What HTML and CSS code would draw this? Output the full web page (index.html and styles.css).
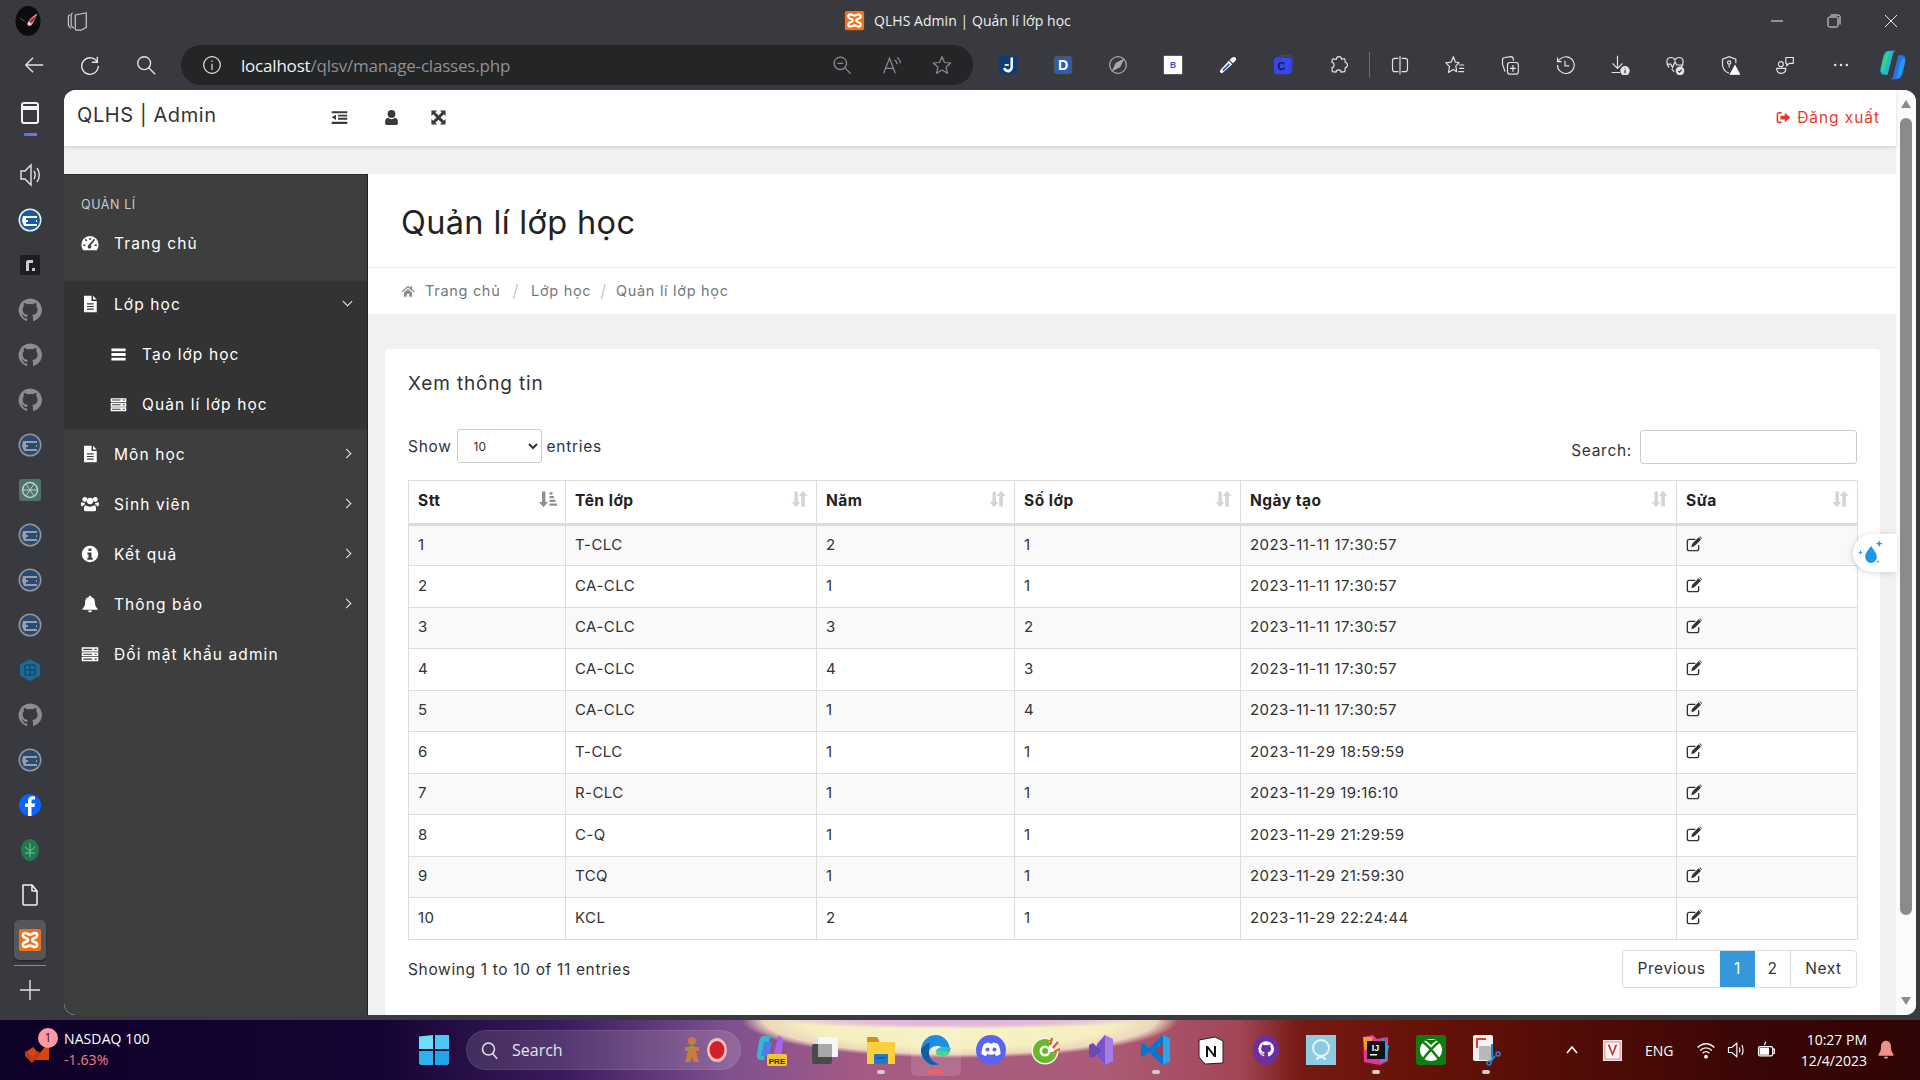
FILE: index.html
```html
<!DOCTYPE html>
<html lang="vi">
<head>
<meta charset="utf-8">
<title>QLHS Admin | Quản lí lớp học</title>
<link rel="stylesheet" href="styles.css">
</head>
<body>
<svg class="defs" aria-hidden="true">
  <symbol id="i-xampp" viewBox="0 0 24 24"><rect x="1" y="1" width="22" height="22" rx="2" fill="#f0701c"/><path d="M7 5c2 0 3 1.500 5 1.500S15 5 17 5c2.800 0 3 4-.5 5-1.500.4-2.500 1-2.500 2s1 1.600 2.500 2c3.500 1 3.300 5 .5 5-2 0-3-1.500-5-1.500S9 19 7 19c-2.800 0-3-4 .5-5 1.500-.4 2.500-1 2.500-2s-1-1.600-2.500-2C4 9 4.200 5 7 5z" fill="none" stroke="#fff" stroke-width="2.600"/></symbol>
  <symbol id="i-site" viewBox="0 0 24 24"><circle cx="12" cy="12" r="11.500" fill="#e8eef6"/><circle cx="12" cy="12" r="10" fill="#1b5ba6"/><path d="M5 8h14v2H8v2h11v2H8v2h11v2H6l-2-5z" fill="#fff"/><path d="M10 12h8v2h-8z" fill="#1b5ba6"/></symbol>
  <symbol id="i-github" viewBox="0 0 24 24"><path fill="#8b8c90" fill-rule="evenodd" d="M12 .5a11.500 11.500 0 0 0-3.600 22.400c.6.100.8-.2.800-.6v-2c-3.200.7-3.900-1.500-3.900-1.500-.5-1.300-1.300-1.700-1.300-1.700-1-.7.100-.7.100-.7 1.200.1 1.800 1.200 1.800 1.200 1 1.800 2.700 1.300 3.400 1 .1-.8.400-1.300.7-1.600-2.600-.3-5.300-1.300-5.300-5.700 0-1.300.4-2.300 1.200-3.100-.1-.3-.5-1.500.1-3.100 0 0 1-.3 3.200 1.200a11 11 0 0 1 5.800 0c2.200-1.500 3.200-1.200 3.200-1.200.6 1.600.2 2.800.1 3.100.7.800 1.200 1.900 1.200 3.100 0 4.400-2.700 5.400-5.300 5.700.4.400.8 1.100.8 2.200v3.200c0 .3.200.7.800.6A11.500 11.500 0 0 0 12 .5z"/></symbol>
  <symbol id="i-file" viewBox="0 0 24 24"><path fill-rule="evenodd" fill="#fff" d="M4 1h10v7h7v15H4zM16 1l5 5h-5zM8 11v1.500h9V11zM8 14.500V16h9v-1.500zM8 18v1.500h9V18z"/></symbol>
  <symbol id="i-server" viewBox="0 0 24 24"><path fill-rule="evenodd" fill="#fff" d="M1 3h22v5.500H1zM1 9.500h22V15H1zM1 16h22v5.500H1zM3 5v1.500h12V5zM18 5v1.500h3V5zM3 11.500V13h12v-1.500zM18 11.500V13h3v-1.500zM3 18v1.500h12V18zM18 18v1.500h3V18z"/></symbol>
  <symbol id="i-bars" viewBox="0 0 24 24"><path fill="#fff" d="M2 3.500h20v4H2zM2 10h20v4H2zM2 16.500h20v4H2z"/></symbol>
  <symbol id="i-dash" viewBox="0 0 24 24"><path fill-rule="evenodd" fill="#fff" d="M12 2.500A11.500 11.500 0 0 0 .5 14c0 2.900 1 5.500 2.600 7.500h17.800c1.600-2 2.600-4.600 2.600-7.500A11.500 11.500 0 0 0 12 2.500zM11 5h2v3h-2zM5 7.500l1.500-1.200 2 2.500L7 10zM3 14h3v2H3zM18 14h3v2h-3zM19 7.500l-6 7.500a2.500 2.500 0 1 1-3-.2l7.500-8.500z"/></symbol>
  <symbol id="i-users" viewBox="0 0 24 24"><g fill="#fff"><circle cx="12" cy="8" r="4.200"/><circle cx="5" cy="6" r="3.200"/><circle cx="19" cy="6" r="3.200"/><path d="M6.500 13.500c1 .8 3 2 5.500 2s4.500-1.200 5.500-2c1.500 0 2.500 1.500 2.500 4v2.500c0 1-.7 1.500-1.700 1.500H5.700C4.700 21.500 4 21 4 20v-2.500c0-2.500 1-4 2.500-4z"/><path d="M0 11c0-1 .5-1.500 1.500-1.500 1 .7 2.500 1.500 3.700 1-.3 1-.2 1.500 0 2-1.500.3-2.300 1.200-2.700 2.500C1 15 0 14.500 0 13zM24 11c0-1-.5-1.500-1.500-1.500-1 .7-2.500 1.500-3.700 1 .3 1 .2 1.500 0 2 1.500.3 2.300 1.200 2.700 2.500 1.500 0 2.500-.5 2.500-2z"/></g></symbol>
  <symbol id="i-info" viewBox="0 0 24 24"><path fill-rule="evenodd" fill="#fff" d="M12 1a11 11 0 1 0 0 22 11 11 0 0 0 0-22zM10 4.500h4v3.500h-4zM8.500 10H14v7h1.500v2.500h-7V17H10v-4.500H8.500z"/></symbol>
  <symbol id="i-bell" viewBox="0 0 24 24"><path fill="#fff" d="M12 1c-1 0-1.500.6-1.500 1.500C7 3.200 5.500 6 5.500 9.500c0 4.500-1.500 6.500-3.500 8.500v1.500h20V18c-2-2-3.500-4-3.500-8.500 0-3.500-1.500-6.300-5-7C13.500 1.600 13 1 12 1zM9.500 20.500a2.500 2.500 0 0 0 5 0z"/></symbol>
  <symbol id="i-home" viewBox="0 0 24 24"><path fill="#8a8f96" d="M12 3 1 12.500l1.500 1.500L12 6l9.500 8 1.500-1.500-4-3.500V4h-3v2.500zM5 14.500V22h5v-5.500h4V22h5v-7.500L12 8.500z"/></symbol>
  <symbol id="i-user" viewBox="0 0 24 24"><g fill="#3a3a3a"><circle cx="12" cy="7" r="5.500"/><path d="M7 12.500c1.300 1.200 3 2 5 2s3.700-.8 5-2c3 .3 4 3 4 6.500v1c0 1.500-1 2.500-2.500 2.500h-13C4 22.500 3 21.500 3 20v-1c0-3.500 1-6.200 4-6.500z"/></g></symbol>
  <symbol id="i-expand" viewBox="0 0 24 24"><path fill="#3a3a3a" d="M2 2h8L7.500 4.500l4.500 4.500 4.500-4.500L14 2h8v8l-2.500-2.500L15 12l4.500 4.500L22 14v8h-8l2.500-2.500L12 15l-4.500 4.500L10 22H2v-8l2.500 2.500L9 12 4.500 7.500 2 10z"/></symbol>
  <symbol id="i-outdent" viewBox="0 0 24 24"><path fill="#3a3a3a" d="M1 3h22v3H1zM10 8h13v2.500H10zM10 12.500h13V15H10zM1 18h22v3H1zM7 8v7.500L1 11.700z"/></symbol>
  <symbol id="i-signout" viewBox="0 0 24 24"><path fill="#e8392a" d="M9 3H5a4 4 0 0 0-4 4v10a4 4 0 0 0 4 4h4v-2.500H5A1.500 1.500 0 0 1 3.500 17V7A1.500 1.500 0 0 1 5 5.500h4zM14 4.500V9H7v6h7v4.500l9-7.500z"/></symbol>
  <symbol id="i-edit" viewBox="0 0 24 24"><path fill="none" stroke="#333" stroke-width="2" d="M19 14v5a3 3 0 0 1-3 3H5a3 3 0 0 1-3-3V8a3 3 0 0 1 3-3h9"/><path fill="#333" d="M9 12 19 2l3.500 3.500-10 10L8 17zM20 1l1-.5 3 3-.5 1z"/></symbol>
  <symbol id="i-sort" viewBox="0 0 24 24"><path fill="#d5d5d5" d="M6 2h4.500v14H14l-6 7-6-7h4zM15 22V8h-3.500l6-7 6 7H20v14z"/></symbol>
  <symbol id="i-sort-asc" viewBox="0 0 24 24"><path fill="#8f8f8f" d="M4 2h4.500v14H12l-6 7-6-7h4zM14 3h4v3h-4zM14 8h6v3h-6zM14 13h8v3h-8zM14 18h10v3H14z"/></symbol>
  <symbol id="i-drop" viewBox="0 0 24 24"><g fill="#1e96ee"><path d="M12 6c3 4 5 6.500 5 9.500a5 5 0 0 1-10 0C7 12.500 9 10 12 6z"/><path d="M19 1l.8 2.200L22 4l-2.200.8L19 7l-.8-2.200L16 4l2.200-.8zM3 9.500l.6 1.400 1.400.6-1.400.6L3 14l-.6-1.900L1 11.500l1.400-.6zM18 18l.4 1.100 1.100.4-1.100.4-.4 1.100-.4-1.100-1.100-.4 1.100-.4z"/></g></symbol>
</svg>

<div class="screen">
  <div class="browser">
    <header class="titlebar">
      <div class="title-left">
        <svg class="rog" viewBox="0 0 30 36"><ellipse cx="15" cy="18" rx="15" ry="18" fill="#0c0c0e"/><path d="M4 14c5 2 8 4 10 8 2-6 6-9 12-13-2 6-4 10-7 14l-3 1c-3-5-7-7-12-10z" fill="#d8d8d8"/><path d="M16 18c3-3 6-5 9-7-1 4-3 7-6 10z" fill="#c8202c"/></svg>
        <svg class="tabs-ic" viewBox="0 0 24 24" fill="none" stroke="#c9cacc" stroke-width="1.300"><path d="M3 5 1.500 7v10l3 3M6 3 4.500 5v12l3 3"/><path d="M9 5.500 21 3v16l-6 3H10a2 2 0 0 1-1-2z" stroke-linejoin="round"/></svg>
      </div>
      <div class="title-center">
        <svg class="fav"><use href="#i-xampp"/></svg>
        <span class="title-text">QLHS Admin | Quản lí lớp học</span>
      </div>
      <div class="winctl">
        <svg viewBox="0 0 14 14" stroke="#e8e8e8" fill="none"><path d="M1 7h12"/></svg>
        <svg viewBox="0 0 14 14" stroke="#e8e8e8" fill="none"><rect x="1" y="3" width="10" height="10" rx="1.500"/><path d="M3.500 1h8a1.500 1.500 0 0 1 1.500 1.500v8"/></svg>
        <svg viewBox="0 0 14 14" stroke="#e8e8e8" fill="none"><path d="m1 1 12 12M13 1 1 13"/></svg>
      </div>
    </header>

    <div class="toolbar">
      <div class="nav-ics">
        <svg viewBox="0 0 24 24" fill="none" stroke="#e4e4e4" stroke-width="1.500"><path d="M22 12H3M11 4l-8 8 8 8"/></svg>
        <svg viewBox="0 0 24 24" fill="none" stroke="#e4e4e4" stroke-width="1.500"><path d="M20 9a9 9 0 1 0 1 4M20 3v6h-6"/></svg>
        <svg viewBox="0 0 24 24" fill="none" stroke="#e4e4e4" stroke-width="1.500"><circle cx="10" cy="10" r="7"/><path d="m15 15 7 7"/></svg>
      </div>
      <div class="addr">
        <svg class="addr-info" viewBox="0 0 24 24" fill="none" stroke="#e4e4e4" stroke-width="1.400"><circle cx="12" cy="12" r="10"/><path d="M12 10.500V18M12 6.500v2"/></svg>
        <span class="url"><span class="url-host">localhost</span>/qlsv/manage-classes.php</span>
        <div class="addr-ics">
          <svg viewBox="0 0 24 24" fill="none" stroke="#8a8b8e" stroke-width="1.500"><circle cx="10" cy="10" r="7.500"/><path d="m15.500 15.500 7 7M6.500 10h7"/></svg>
          <svg viewBox="0 0 24 24" fill="none" stroke="#8a8b8e" stroke-width="1.500"><path d="M2 22 9 4l7 18M5 16h8M15 6c2 1 3 3 3 5M18 3c2.500 1.500 4 4 4 7"/></svg>
          <svg viewBox="0 0 24 24" fill="none" stroke="#8a8b8e" stroke-width="1.500" stroke-linejoin="round"><path d="m12 2 3 7 7.500.6-5.700 5 1.800 7.400L12 18l-6.600 4 1.800-7.400-5.700-5L9 9z"/></svg>
        </div>
      </div>
      <div class="ext-ics">
        <svg viewBox="0 0 24 24"><rect x="1" y="1" width="22" height="22" rx="2" fill="#0d3c78"/><path d="M15 3h3v11c0 4-3 7-6 7s-5-2-6-5l3-1c.5 1.500 1.500 2.500 3 2.500 2 0 3-1.500 3-4z" fill="#fff"/><path d="M8 11h5v2H8z" fill="#fff"/></svg>
        <svg viewBox="0 0 24 24"><rect x="1.500" y="1.500" width="21" height="21" rx="3" fill="#2f5cab" stroke="#5a5a4e"/><text x="12" y="18" class="ext-letter ext-d">D</text></svg>
        <svg viewBox="0 0 24 24" fill="none" stroke="#a9aaad" stroke-width="1.500"><circle cx="12" cy="12" r="10"/><path d="m6 18 4-8 8-4-4 8z" fill="#a9aaad"/></svg>
        <svg viewBox="0 0 24 24"><rect x="1" y="1" width="22" height="22" fill="#fff"/><text x="12" y="16" class="ext-letter ext-b">B</text></svg>
        <svg viewBox="0 0 24 24"><path d="M3 21c-1-1-1-2 0-3L13 7l4 4L6 21c-1 1-2 1-3 0z" fill="#fff"/><path d="m5 18 8-8 1.500 1.500-8 8z" fill="#2a5ad6"/><path d="m14 6 3-3c1-1 3-1 4 0s1 3 0 4l-3 3z" fill="#fff"/></svg>
        <svg viewBox="0 0 24 24"><rect x="1" y="3" width="21" height="20" rx="3" fill="#3a46e8"/><rect x="7" y="1" width="16" height="18" rx="2" fill="none" stroke="#3a46e8"/><text x="10" y="18" class="ext-letter ext-c">C</text></svg>
        <svg viewBox="0 0 24 24" fill="none" stroke="#e4e4e4" stroke-width="1.400" stroke-linejoin="round"><path d="M9 5c0-4 6-4 6 0l4-.5.500 4.500c3.500 0 3.500 6 0 6l-.5 5-4.500.5c0-3.500-6-3.500-6 0L4 20l-.5-5c3.500 0 3.500-6 0-6L4 5z"/></svg>
        <span class="ext-div"></span>
        <svg viewBox="0 0 24 24" fill="none" stroke="#e4e4e4" stroke-width="1.400"><path d="M10 4H6a3 3 0 0 0-3 3v10a3 3 0 0 0 3 3h4M14 4h4a3 3 0 0 1 3 3v10a3 3 0 0 1-3 3h-4M12 1v22"/></svg>
        <svg viewBox="0 0 24 24" fill="none" stroke="#e4e4e4" stroke-width="1.400" stroke-linejoin="round"><path d="m10 2 2.500 6.500L17 9l-4 4 1 7-4-2.500L4 21l1.500-7L1 9.500l6.500-1zM17 12h6M17 16h6M16 20h7"/></svg>
        <svg viewBox="0 0 24 24" fill="none" stroke="#e4e4e4" stroke-width="1.400" stroke-linejoin="round"><path d="M6 20 3 11V6c0-2 1-3 3-3l7-1c2 0 3 1 3 3v2"/><rect x="9" y="9" width="13" height="14" rx="3"/><path d="M15.500 12v8M12 16h7"/></svg>
        <svg viewBox="0 0 24 24" fill="none" stroke="#e4e4e4" stroke-width="1.400"><path d="M3 12a10 10 0 1 0 3-7L3 8M3 3v5h5M12 7v6h5"/></svg>
        <svg viewBox="0 0 24 24" fill="none" stroke="#e4e4e4" stroke-width="1.400"><path d="M9 1v14M3 10l6 6 6-6M2 21h10"/><circle cx="18" cy="19" r="5" fill="#e4e4e4"/><path d="M18 18v4M18 15.500v1" stroke="#333"/></svg>
        <svg viewBox="0 0 24 24" fill="none" stroke="#e4e4e4" stroke-width="1.400"><path d="M5 15C1 11 1 3 7 3c2 0 4 1 5 3 1-2 3-3 5-3 6 0 6 8 2 12M2 11h5l2 4 3-7 2 4h8M8 17l3 3"/><circle cx="18" cy="19" r="4.500" fill="#e4e4e4"/><path d="m16 19 1.500 1.500 2.500-3" stroke="#333"/></svg>
        <svg viewBox="0 0 24 24" fill="none" stroke="#e4e4e4" stroke-width="1.400"><path d="M11 22c-5-2-8-6-8-11V5l8-3 8 3v5"/><circle cx="11" cy="9" r="2"/><path d="M11 11v4"/><path d="m18 13 5.500 10h-11z" fill="#fff" stroke="#fff"/></svg>
        <svg viewBox="0 0 24 24" fill="none" stroke="#e4e4e4" stroke-width="1.400" stroke-linejoin="round"><circle cx="7" cy="11" r="3"/><path d="M2 16h11c0 4-2.500 6-5.500 6S2 20 2 16zM13 3h9v7h-5l-3 3v-3h-1z"/></svg>
        <svg viewBox="0 0 24 24" fill="#e4e4e4"><circle cx="5" cy="12" r="1.500"/><circle cx="12" cy="12" r="1.500"/><circle cx="19" cy="12" r="1.500"/></svg>
        <svg class="copilot" viewBox="0 0 32 36"><path d="M12 2c-4 0-6 3-7 7L2 22c-1 4 1 7 4 7h4l6-24c.5-2 2-3 4-3z" fill="#22b8cf"/><path d="M5 26c-2-1-3-3-2-6l3-11c1-3 3-6 6-6l-4 17z" fill="#2ed28a"/><path d="M20 34c4 0 6-3 7-7l3-13c1-4-1-7-4-7h-4l-6 24c-.5 2-2 3-4 3z" fill="#2f6fe8"/><path d="M27 10c2 1 3 3 2 6l-3 11c-1 3-3 6-6 6l4-17z" fill="#1aa2f0"/></svg>
      </div>
    </div>

    <div class="browser-main">
      <aside class="vtabs">
        <div class="vt vt-first">
          <svg class="vt-ic" viewBox="0 0 24 24" fill="none" stroke="#f2f2f2" stroke-width="2"><rect x="4" y="2" width="16" height="20" rx="2"/><path d="M4 7h16" stroke-width="4"/></svg>
          <span class="vt-mark"></span>
        </div>
        <div class="vt"><svg class="vt-ic" viewBox="0 0 24 24" fill="none" stroke="#e4e4e4" stroke-width="1.400"><path d="M3 8v8h4l6 6V2L7 8zM16 8c1.500 2 1.500 6 0 8M19 5c3 4 3 10 0 14"/></svg></div>
        <div class="vt"><svg class="vt-ic"><use href="#i-site"/></svg></div>
        <div class="vt"><svg class="vt-ic" viewBox="0 0 24 24"><rect x="2" y="2" width="20" height="20" rx="2" fill="#1d1e20"/><path d="M8 18V9c0-1 1-2 2-2h5v3h-4v8z" fill="#c9cacc"/><rect x="14" y="15" width="3" height="3" fill="#c9cacc"/></svg></div>
        <div class="vt"><svg class="vt-ic"><use href="#i-github"/></svg></div>
        <div class="vt"><svg class="vt-ic"><use href="#i-github"/></svg></div>
        <div class="vt"><svg class="vt-ic"><use href="#i-github"/></svg></div>
        <div class="vt vt-dim"><svg class="vt-ic"><use href="#i-site"/></svg></div>
        <div class="vt"><svg class="vt-ic" viewBox="0 0 24 24"><rect x="1" y="1" width="22" height="22" rx="3" fill="#4f7369"/><circle cx="12" cy="12" r="7.500" fill="none" stroke="#b9cec7" stroke-width="1.500"/><path d="m8 6 8 12M16 6 8 18M4.500 12h15" stroke="#b9cec7"/></svg></div>
        <div class="vt vt-dim"><svg class="vt-ic"><use href="#i-site"/></svg></div>
        <div class="vt vt-dim"><svg class="vt-ic"><use href="#i-site"/></svg></div>
        <div class="vt vt-dim"><svg class="vt-ic"><use href="#i-site"/></svg></div>
        <div class="vt"><svg class="vt-ic" viewBox="0 0 24 24"><path d="m12 1 10 5.500v11L12 23 2 17.500v-11z" fill="#1d6a96"/><path d="m7 7 10 0v10H7zM12 7v10M7 12h10" stroke="#0f3f60" fill="none"/></svg></div>
        <div class="vt"><svg class="vt-ic"><use href="#i-github"/></svg></div>
        <div class="vt vt-dim"><svg class="vt-ic"><use href="#i-site"/></svg></div>
        <div class="vt"><svg class="vt-ic" viewBox="0 0 24 24"><circle cx="12" cy="12" r="11" fill="#0866ff"/><path d="M13.500 23v-9h3l.5-3.500h-3.500V8.300c0-1 .4-1.700 1.800-1.700H17V3.500c-.5-.1-1.500-.2-2.500-.2-2.700 0-4.500 1.600-4.500 4.600v2.600H7V14h3v9z" fill="#fff"/></svg></div>
        <div class="vt"><svg class="vt-ic" viewBox="0 0 24 24"><ellipse cx="12" cy="12" rx="9" ry="11" fill="#1f7a4d"/><path d="M12 5v14M7 9l5 4 5-4M7 15h10" stroke="#7fbf9e" fill="none"/></svg></div>
        <div class="vt"><svg class="vt-ic" viewBox="0 0 24 24" fill="none" stroke="#f2f2f2" stroke-width="1.500" stroke-linejoin="round"><path d="M5 2h9l5 6v13a1 1 0 0 1-1 1H6a1 1 0 0 1-1-1zM14 2v6h5"/></svg></div>
        <div class="vt vt-active"><svg class="vt-ic"><use href="#i-xampp"/></svg></div>
        <span class="vt-sep"></span>
        <div class="vt vt-add"><svg class="vt-ic" viewBox="0 0 24 24" fill="none" stroke="#e4e4e4" stroke-width="1.400"><path d="M12 2v20M2 12h20"/></svg></div>
      </aside>

      <div class="webview">
        <div class="page">
          <nav class="topnav">
            <span class="brand">QLHS | Admin</span>
            <div class="nav-tools">
              <svg class="tool-outdent"><use href="#i-outdent"/></svg>
              <svg class="tool-user"><use href="#i-user"/></svg>
              <svg class="tool-expand"><use href="#i-expand"/></svg>
            </div>
            <a class="logout"><svg><use href="#i-signout"/></svg>Đăng xuất</a>
          </nav>
          <div class="page-body">
            <aside class="side">
              <div class="side-label">QUẢN LÍ</div>
              <div class="mi mi-first"><svg><use href="#i-dash"/></svg><span>Trang chủ</span></div>
              <div class="mi-group">
                <div class="mi"><svg><use href="#i-file"/></svg><span>Lớp học</span><i class="chev chev-down"></i></div>
                <div class="mi mi-sub"><svg><use href="#i-bars"/></svg><span>Tạo lớp học</span></div>
                <div class="mi mi-sub"><svg><use href="#i-server"/></svg><span>Quản lí lớp học</span></div>
              </div>
              <div class="mi"><svg><use href="#i-file"/></svg><span>Môn học</span><i class="chev"></i></div>
              <div class="mi"><svg><use href="#i-users"/></svg><span>Sinh viên</span><i class="chev"></i></div>
              <div class="mi"><svg><use href="#i-info"/></svg><span>Kết quả</span><i class="chev"></i></div>
              <div class="mi"><svg><use href="#i-bell"/></svg><span>Thông báo</span><i class="chev"></i></div>
              <div class="mi"><svg><use href="#i-server"/></svg><span>Đổi mật khẩu admin</span></div>
            </aside>
            <main class="content">
              <div class="page-head"><h1>Quản lí lớp học</h1></div>
              <div class="crumbs">
                <svg><use href="#i-home"/></svg>
                <span>Trang chủ</span><b>/</b><span>Lớp học</span><b class="sep-tight">/</b><span>Quản lí lớp học</span>
              </div>
              <div class="wrap">
                <section class="card">
                  <h2>Xem thông tin</h2>
                  <div class="dt-top">
                    <div class="dt-len">Show <select><option>10</option></select> entries</div>
                    <div class="dt-search"><span class="search-label">Search:</span> <input type="text"></div>
                  </div>
                  <table class="dt">
                    <colgroup><col class="c1"><col class="c2"><col class="c3"><col class="c4"><col class="c5"><col class="c6"></colgroup>
                    <thead>
                      <tr>
                        <th>Stt<svg class="s-asc"><use href="#i-sort-asc"/></svg></th>
                        <th>Tên lớp<svg><use href="#i-sort"/></svg></th>
                        <th>Năm<svg><use href="#i-sort"/></svg></th>
                        <th>Số lớp<svg><use href="#i-sort"/></svg></th>
                        <th>Ngày tạo<svg><use href="#i-sort"/></svg></th>
                        <th>Sửa<svg><use href="#i-sort"/></svg></th>
                      </tr>
                    </thead>
                    <tbody>
                      <tr><td>1</td><td>T-CLC</td><td>2</td><td>1</td><td>2023-11-11 17:30:57</td><td><svg class="ed"><use href="#i-edit"/></svg></td></tr>
                      <tr><td>2</td><td>CA-CLC</td><td>1</td><td>1</td><td>2023-11-11 17:30:57</td><td><svg class="ed"><use href="#i-edit"/></svg></td></tr>
                      <tr><td>3</td><td>CA-CLC</td><td>3</td><td>2</td><td>2023-11-11 17:30:57</td><td><svg class="ed"><use href="#i-edit"/></svg></td></tr>
                      <tr><td>4</td><td>CA-CLC</td><td>4</td><td>3</td><td>2023-11-11 17:30:57</td><td><svg class="ed"><use href="#i-edit"/></svg></td></tr>
                      <tr><td>5</td><td>CA-CLC</td><td>1</td><td>4</td><td>2023-11-11 17:30:57</td><td><svg class="ed"><use href="#i-edit"/></svg></td></tr>
                      <tr><td>6</td><td>T-CLC</td><td>1</td><td>1</td><td>2023-11-29 18:59:59</td><td><svg class="ed"><use href="#i-edit"/></svg></td></tr>
                      <tr><td>7</td><td>R-CLC</td><td>1</td><td>1</td><td>2023-11-29 19:16:10</td><td><svg class="ed"><use href="#i-edit"/></svg></td></tr>
                      <tr><td>8</td><td>C-Q</td><td>1</td><td>1</td><td>2023-11-29 21:29:59</td><td><svg class="ed"><use href="#i-edit"/></svg></td></tr>
                      <tr><td>9</td><td>TCQ</td><td>1</td><td>1</td><td>2023-11-29 21:59:30</td><td><svg class="ed"><use href="#i-edit"/></svg></td></tr>
                      <tr><td>10</td><td>KCL</td><td>2</td><td>1</td><td>2023-11-29 22:24:44</td><td><svg class="ed"><use href="#i-edit"/></svg></td></tr>
                    </tbody>
                  </table>
                  <div class="dt-bottom">
                    <div class="dt-info">Showing 1 to 10 of 11 entries</div>
                    <div class="pager"><a class="pg-prev">Previous</a><a class="pg-on">1</a><a class="pg-two">2</a><a class="pg-next">Next</a></div>
                  </div>
                </section>
              </div>
            </main>
          </div>
        </div>
        <div class="scrollbar">
          <i class="arrow-up"></i>
          <i class="thumb"></i>
          <i class="arrow-down"></i>
        </div>
        <div class="drop-widget"><svg><use href="#i-drop"/></svg></div>
      </div>
    </div>
  </div>

  <footer class="taskbar">
    <div class="tb-stock">
      <svg class="stock-ic" viewBox="0 0 30 30"><path d="M1 14 8 9l6 7 10-12v18H8v-3h-2z" fill="#d8430e"/><path d="m1 13 6 6 6-6 3 3-9 9-9-9z" fill="#b93a1a"/></svg>
      <span class="stock-badge">1</span>
      <div class="stock-txt"><div>NASDAQ 100</div><div class="stock-neg">-1.63%</div></div>
    </div>
    <div class="tb-center">
      <svg class="win" viewBox="0 0 30 30"><path fill="#6fdcfb" d="M0 1.500 14 0v14H0z"/><path fill="#4cc8f5" d="M16 0l14-.0V14H16z"/><path fill="#2fb3ee" d="M0 16h14v14H1.500L0 28.500z"/><path fill="#1ea5ea" d="M16 16h14v12.500L28.500 30H16z"/></svg>
      <div class="tb-search">
        <svg class="tb-search-ic" viewBox="0 0 24 24" fill="none" stroke="#e6e2ec" stroke-width="2"><circle cx="10" cy="10" r="8"/><path d="m15.500 16 6 7"/></svg>
        <span>Search</span>
        <svg class="tb-deco" viewBox="0 0 48 30"><circle cx="11" cy="6" r="4" fill="#c77b3c"/><path d="M4 12h14v4h-3l3 11h-5l-2-5-2 5H4l3-11H4z" fill="#c77b3c"/><path d="M8 11h6l-3 2z" fill="#5fbf4a"/><ellipse cx="36" cy="15" rx="10" ry="12" fill="#f4c0b4"/><ellipse cx="36" cy="15" rx="7.500" ry="9" fill="#d51f2d"/></svg>
      </div>
      <div class="tb-apps">
        <div class="app"><svg viewBox="0 0 32 32"><path d="M9 2c-3 0-4 2-5 5L2 20c-1 4 1 6 4 6h3l5-19c.5-3 2-5 4-5z" fill="#33b9c9"/><path d="M23 2c4 0 6 3 5 7l-2 14h-8l4-16z" fill="#a864ea"/><path d="M9 8h8l-3 14H6z" fill="#4a7fea"/><rect x="12" y="20" width="20" height="12" rx="2" fill="#f4c430"/><text x="22" y="29.500" class="pre">PRE</text></svg></div>
        <div class="app"><svg viewBox="0 0 32 32"><rect x="2" y="10" width="20" height="20" rx="2" fill="#4a4a4a"/><rect x="8" y="3" width="20" height="20" rx="1" fill="#f6f6f6"/><rect x="8" y="10" width="14" height="13" fill="#a8a8a8"/></svg></div>
        <div class="app app-run"><svg viewBox="0 0 32 32"><path d="M2 6h11l3 3h14v17H2z" fill="#e8a81a"/><path d="M2 3h10l2 3v4H2z" fill="#d0921a"/><path d="M2 8h28v22H2z" fill="#fad03c"/><rect x="9" y="20" width="14" height="10" rx="1" fill="#1f78c8"/><path d="M12 24h8" stroke="#0d4a80"/></svg></div>
        <div class="app app-on"><svg viewBox="0 0 32 32"><path d="M16 1a15 15 0 0 0-15 15c0 8 6 15 14 15 2 0 3 0 4-1-6-1-10-6-10-11 0-4 3-7 8-7 4 0 6 2 6 5h7C30 8 24 1 16 1z" fill="#1c8fe0"/><path d="M9 19c0 5 4 10 10 11-4 2-9 1-12-2-4-3-6-8-6-12 1-3 5-7 9-7-1 2-1 7-1 10z" fill="#0f5fa8"/><path d="M30 17c0 3-3 5-8 5-4 0-6-1-6-3 0-2 3-2 6-2z" fill="#4ad48a"/><path d="M31 14c0 2-3 3-9 3-3 0-6 0-6 2-1-3 3-6 7-6 3 0 6 0 8 1z" fill="#2bbfd0"/></svg></div>
        <div class="app"><svg viewBox="0 0 32 32"><circle cx="16" cy="16" r="15" fill="#5865f2"/><path d="M9 10c2-1 4-1.500 5-1.500l.5 1h3l.5-1c1 0 3 .5 5 1.500 2 3.500 2.500 7 2.500 10-1.500 1-3 1.800-4.500 2l-1-2c-3 1-5 1-8 0l-1 2c-1.500-.2-3-1-4.500-2 0-3 .5-6.500 2.500-10z" fill="#fff"/><circle cx="12.500" cy="15.500" r="2" fill="#5865f2"/><circle cx="19.500" cy="15.500" r="2" fill="#5865f2"/></svg></div>
        <div class="app"><svg viewBox="0 0 32 32"><circle cx="15" cy="17" r="13.500" fill="#f6f6f6"/><circle cx="15" cy="17" r="12" fill="#6ab82a"/><circle cx="15" cy="17" r="5.500" fill="#f6f6f6"/><circle cx="15" cy="17" r="3" fill="#6ab82a"/><path d="M19 7h9v11h-9z" fill="#f6f6f6"/><path d="m20 11 2-7M23 14l5-6M24 18l6-3" stroke="#e85a2a" stroke-width="2.400"/></svg></div>
        <div class="app"><svg viewBox="0 0 32 32"><path d="M20 1 28 5v22l-8 4-13-14z" fill="#a57be8"/><path d="M20 1v30l-8-9V10z" fill="#7a54c8"/><path d="m4 11 4-2 8 8-8 7-4-2z" fill="#6a4ab0"/></svg></div>
        <div class="app app-run"><svg viewBox="0 0 32 32"><path d="m23 1 7 3.500v23L23 31 9 18l-6 5-2-1.500v-11L3 9l6 5z" fill="#0078d4"/><path d="M23 9v14l-8-7z" fill="#a04050"/><path d="m23 1 7 3.500v23L23 31z" fill="#29a5ee"/></svg></div>
        <div class="app"><svg viewBox="0 0 32 32"><path d="M4 6 20 3l8 4v22l-18 1-6-7z" fill="#fff" stroke="#222"/><path d="M11 12h2l6 8v-8h2v11h-2l-6-8v8h-2z" fill="#111"/></svg></div>
        <div class="app"><svg viewBox="0 0 32 32"><ellipse cx="16" cy="16" rx="13" ry="15" fill="#6b2fa0"/><path transform="translate(8 7) scale(.67)" d="M12 .5a11.500 11.500 0 0 0-3.600 22.400c.6.100.8-.2.800-.6v-2c-3.200.7-3.900-1.500-3.900-1.500-.5-1.300-1.300-1.700-1.300-1.700-1-.7.100-.7.100-.7 1.200.1 1.800 1.200 1.800 1.200 1 1.800 2.700 1.300 3.400 1 .1-.8.400-1.300.7-1.600-2.600-.3-5.300-1.300-5.300-5.700 0-1.300.4-2.300 1.200-3.100-.1-.3-.5-1.500.1-3.100 0 0 1-.3 3.200 1.200a11 11 0 0 1 5.800 0c2.200-1.500 3.200-1.200 3.200-1.200.6 1.600.2 2.800.1 3.100.7.800 1.200 1.900 1.200 3.100 0 4.400-2.700 5.400-5.300 5.700.4.400.8 1.100.8 2.200v3.200c0 .3.200.7.800.6A11.500 11.500 0 0 0 12 .5z" fill="#fff"/></svg></div>
        <div class="app"><svg viewBox="0 0 32 32"><rect x="1" y="1" width="30" height="30" fill="#8ccbe0"/><circle cx="16" cy="14" r="8" fill="none" stroke="#e8f6fb" stroke-width="2"/><path d="M12 26c0-4 8-4 8 0" fill="none" stroke="#e8f6fb" stroke-width="2"/></svg></div>
        <div class="app app-run"><svg viewBox="0 0 32 32"><path d="m3 3 10-2 4 4 11-2v24l-8 4-16-3z" fill="#e8349a"/><path d="m22 3 7 9-3 15-6 1z" fill="#1ea5ea"/><path d="M3 3h10l-2 8-6 6z" fill="#f0a020"/><rect x="7" y="7" width="18" height="18" fill="#111"/><text x="15.500" y="17" class="ij">IJ</text><rect x="10" y="20" width="7" height="1.500" fill="#fff"/></svg></div>
        <div class="app"><svg viewBox="0 0 32 32"><rect x="1" y="1" width="30" height="30" rx="3" fill="#107c10"/><circle cx="16" cy="16" r="11" fill="#fff"/><path d="M8 8c4 3 12 12 16 17M24 8C20 11 12 20 8 25" stroke="#107c10" stroke-width="2.400" fill="none"/><path d="M16 11c-2-2-4-4-7-5h14c-3 1-5 3-7 5z" fill="#107c10"/></svg></div>
        <div class="app app-run"><svg viewBox="0 0 32 32"><rect x="3" y="1" width="20" height="26" rx="2" fill="#f2f2f2"/><path d="M6 4h10v2H6zM6 4h2v10H6z" fill="#d4402c"/><rect x="9" y="12" width="12" height="14" fill="#b8b8b8"/><path d="M22 10v14M20 28l5-6" stroke="#1e88d8" stroke-width="2" fill="none"/><circle cx="19" cy="29" r="2" fill="none" stroke="#1e88d8" stroke-width="1.500"/><circle cx="28" cy="20" r="2" fill="none" stroke="#1e88d8" stroke-width="1.500"/></svg></div>
      </div>
    </div>
    <div class="tb-tray">
      <svg class="tr-chev" viewBox="0 0 14 14" fill="none" stroke="#fff" stroke-width="1.500"><path d="m2 10 5-6 5 6"/></svg>
      <svg class="tr-v" viewBox="0 0 22 22"><rect x="1" y="0" width="20" height="22" fill="#f6e4e4"/><rect x="3" y="2" width="16" height="18" fill="#fbf3f3" stroke="#d88"/><path d="m6 5 5 12 5-12h-2l-3 8-3-8z" fill="#c62828"/></svg>
      <span class="tr-lang">ENG</span>
      <svg class="tr-ic" viewBox="0 0 24 24" fill="none" stroke="#fff" stroke-width="1.600"><path d="M2 9c6-6 14-6 20 0M5 12.500c4-4 10-4 14 0M8 16c2.500-2.500 5.500-2.500 8 0"/><circle cx="12" cy="20" r="1.500" fill="#fff"/></svg>
      <svg class="tr-ic" viewBox="0 0 24 24" fill="none" stroke="#fff" stroke-width="1.400"><path d="M3 9v6h4l6 5V4L7 9zM16 9c1 2 1 4 0 6M19 6c2 4 2 8 0 12"/></svg>
      <svg class="tr-ic" viewBox="0 0 24 24" fill="none" stroke="#fff" stroke-width="1.400"><rect x="3" y="8" width="17" height="11" rx="2"/><path d="M20 11h2v5h-2"/><path d="M5 10h10v7H5z" fill="#fff"/><path d="m10 6 2-4" /></svg>
      <div class="tr-clock"><div>10:27 PM</div><div>12/4/2023</div></div>
      <svg class="tr-bell" viewBox="0 0 24 24"><path d="M12 1c-3.500 0-6 3-6 7 0 5-1.500 7-3 9v2h18v-2c-1.500-2-3-4-3-9 0-4-2.500-7-6-7zM9.500 20a2.500 2.500 0 0 0 5 0z" fill="#f0918a"/></svg>
    </div>
  </footer>
</div>
</body>
</html>
```

FILE: styles.css
```css
* { box-sizing: border-box; }
html, body { margin: 0; padding: 0; height: 100%; overflow: hidden; }
body { font-family: "Inter", "Noto Sans", sans-serif; background: #393a3f; color: #333; }
.defs { display: none; }
svg { display: block; flex: none; }

.screen { width: 1920px; height: 1080px; display: flex; flex-direction: column; overflow: hidden; }
.browser { height: 1020px; display: flex; flex-direction: column; background: #393a3f; }

/* title bar */
.titlebar { height: 41px; display: flex; align-items: center; color: #f0f0f0; font-family: "Open Sans", sans-serif; }
.title-left { display: flex; align-items: center; gap: 24px; padding-left: 13px; width: 844px; flex: none; }
.rog { width: 30px; height: 30px; }
.tabs-ic { width: 22px; height: 22px; }
.title-center { flex: 1; display: flex; align-items: center; gap: 9px; }
.fav { width: 21px; height: 21px; }
.title-text { font-size: 14px; letter-spacing: .05px; }
.winctl { display: flex; gap: 43px; padding-right: 22px; align-items: center; }
.winctl svg { width: 14px; height: 14px; }

/* toolbar */
.toolbar { height: 49px; display: flex; align-items: center; padding-bottom: 1px; flex: none; }
.nav-ics { display: flex; gap: 34px; padding-left: 23px; width: 181px; }
.nav-ics svg { width: 22px; height: 22px; }
.addr { width: 792px; height: 40px; background: #242527; border-radius: 20px; display: flex; align-items: center; padding-left: 21px; }
.addr-info { width: 20px; height: 20px; }
.url { font-family: "Open Sans", sans-serif; font-size: 17px; color: #8f9094; margin-left: 19px; letter-spacing: -.2px; flex: 1; }
.url-host { color: #f2f2f2; }
.addr-ics { display: flex; gap: 30px; padding-right: 21px; }
.addr-ics svg { width: 20px; height: 20px; }
.ext-ics { flex: 1; display: flex; align-items: center; padding-left: 25px; gap: 35.100px; }
.ext-ics svg { width: 20px; height: 20px; }
.ext-ics svg.copilot { width: 30px; height: 32px; margin-left: -8px; }
.ext-div { width: 1px; height: 26px; background: #6a6b6e; margin: 0 -15px; }
.ext-letter { font-family: "Liberation Sans", sans-serif; font-weight: 700; text-anchor: middle; }
.ext-d { fill: #fff; font-size: 17px; }
.ext-b { fill: #3f46c8; font-size: 10px; }
.ext-c { fill: #101a50; font-size: 13px; }

/* browser body */
.browser-main { height: 925px; display: flex; flex: none; }
.vtabs { width: 64px; padding-right: 4px; display: flex; flex-direction: column; align-items: center; flex: none; }
.vt { width: 100%; height: 45px; flex: none; display: flex; align-items: center; justify-content: center; position: relative; }
.vt-ic { width: 24px; height: 24px; }
.vt-dim .vt-ic { opacity: .5; }
.vt-first { margin-bottom: 17px; }
.vt-mark { position: absolute; left: 24px; top: 43px; width: 13px; height: 3px; background: linear-gradient(90deg, #3f7cf0, #a55ce8); }
.vt-active::before { content: ""; position: absolute; left: 14px; width: 32px; top: 3px; bottom: 2px; background: #55565b; border-radius: 5px; box-shadow: 0 1px 2px rgba(0,0,0,.5); }
.vt-active .vt-ic { position: relative; }
.vt-sep { width: 32px; height: 1px; background: #8a8b8e; margin-top: 3px; flex: none; }
.vt-add { height: 46px; margin-top: 1px; }

.webview { width: 1852px; height: 925px; background: #fff; border-radius: 12px 12px 10px 12px; overflow: hidden; display: flex; position: relative; flex: none; }
.page { width: 1832px; background: #f1f1f1; display: flex; flex-direction: column; }
.scrollbar { width: 20px; background: #fbfbfb; display: flex; flex-direction: column; align-items: center; }
.scrollbar .thumb { width: 12px; height: 797px; background: #8b8b8b; border-radius: 6px; margin-top: 10px; }
.arrow-up { width: 0; height: 0; border: 5.500px solid transparent; border-top: 0; border-bottom: 8px solid #8b8b8b; margin-top: 10px; }
.arrow-down { width: 0; height: 0; border: 5.500px solid transparent; border-bottom: 0; border-top: 8px solid #8b8b8b; margin-top: 82px; }
.drop-widget { position: absolute; left: 1789px; top: 444px; width: 44px; height: 38px; background: #fff; border-radius: 19px 0 0 19px; box-shadow: -1px 1px 6px rgba(0,0,0,.15); display: flex; align-items: center; justify-content: center; padding-right: 8px; }
.drop-widget svg { width: 28px; height: 28px; }

/* top nav */
.topnav { height: 56px; flex: none; background: #fff; box-shadow: 0 2px 3px rgba(0,0,0,.12); display: flex; align-items: center; position: relative; padding: 0 16px 2px 13px; }
.brand { font-size: 20px; color: #333; width: 254px; margin-top: -4px; letter-spacing: .6px; }
.nav-tools { display: flex; align-items: center; flex: 1; }
.nav-tools svg { width: 17px; height: 17px; }
.tool-user { margin-left: 35px; }
.tool-expand { margin-left: 30px; }
.logout { color: #e8392a; font-size: 15.500px; display: flex; align-items: center; gap: 6px; letter-spacing: .95px; }
.logout svg { width: 15px; height: 15px; }

.page-body { flex: 1; margin-top: 28px; display: flex; min-height: 0; overflow: hidden; }

/* sidebar */
.side { width: 304px; flex: none; background: #3e3e3e; border-right: 1px solid #222; border-top: 1px solid #2a2a2a; color: #fff; padding-top: 21px; }
.side-label { font-size: 12.500px; color: #ccc; padding-left: 17px; height: 23px; line-height: 18px; letter-spacing: .6px; }
.mi { height: 50px; display: flex; align-items: center; padding: 0 0 2px 17px; font-size: 15.500px; color: #fff; font-weight: 400; letter-spacing: 1.100px; position: relative; }
.mi svg { width: 18px; height: 18px; margin-right: 15px; }
.mi-first { margin-bottom: 11px; }
.mi-group { background: #333; box-shadow: inset 0 1px 0 #3a3a3a, inset 0 -1px 0 #3a3a3a; height: 150px; flex: none; }
.mi-sub { padding-left: 46px; }
.mi-sub svg { margin-right: 15px; width: 17px; height: 17px; }
.chev { position: absolute; right: 17px; top: 20px; width: 7px; height: 7px; border-right: 1.500px solid #eee; border-top: 1.500px solid #eee; transform: rotate(45deg); }
.chev-down { transform: rotate(135deg); top: 18px; right: 16px; }

/* content */
.content { flex: 1; min-width: 0; display: flex; flex-direction: column; }
.page-head { height: 94px; flex: none; background: #fff; border-bottom: 1px solid #eee; padding: 3px 33px 0; display: flex; align-items: center; }
h1 { margin: 0; font-family: "Inter", sans-serif; font-size: 32.500px; font-weight: 400; color: #222; letter-spacing: .35px; }
.crumbs { height: 46px; flex: none; background: #fff; padding: 0 33px 1px; display: flex; align-items: center; font-size: 14.500px; color: #74787e; letter-spacing: .7px; }
.crumbs svg { width: 14px; height: 14px; margin-right: 10px; }
.crumbs b { font-weight: 300; color: #bbb; margin: 0 12px; font-size: 17px; }
.crumbs .sep-tight { margin: 0 9px; }
.wrap { padding: 35px 16px 0 17px; flex: none; }
.card { background: #fff; border-radius: 4px; padding: 20px 23px 40px 23px; height: 700px; }
h2 { margin: 0; padding-top: 1px; font-size: 19px; font-weight: 400; color: #333; line-height: 27px; letter-spacing: .85px; }
.dt-top { display: flex; justify-content: space-between; align-items: flex-start; margin-top: 33px; height: 50px; font-size: 15.500px; color: #333; letter-spacing: .7px; }
.dt-len { display: flex; align-items: center; gap: 5px; height: 32px; }
.dt-len select { width: 85px; height: 34px; flex: none; background: #fff; border: 1px solid #ccc; border-radius: 3px; font-size: 12px; padding-left: 12px; color: #333; font-family: inherit; }
.dt-search { display: flex; align-items: center; gap: 8px; height: 34px; }
.search-label { padding-top: 6px; }
.dt-search input { width: 217px; height: 34px; border: 1px solid #ccc; border-radius: 3px; background: #fff; }

.dt { width: 1449px; table-layout: fixed; border-collapse: collapse; font-size: 15px; color: #333; letter-spacing: .45px; }
.c1 { width: 157px; } .c2 { width: 251px; } .c3 { width: 198px; } .c4 { width: 226px; } .c5 { width: 436px; } .c6 { width: 181px; }
.dt th { height: 43.500px; border: 1px solid #ddd; border-bottom: 3px solid #ddd; text-align: left; padding: 0 9px 3px; font-weight: 700; color: #222; position: relative; font-size: 15.500px; letter-spacing: .5px; }
.dt th svg { position: absolute; right: 8px; top: 9px; width: 18px; height: 18px; }
.dt td { height: 41.500px; border: 1px solid #ddd; padding: 0 9px 2px; }
.dt tbody tr:nth-child(odd) td { background: #f9f9f9; }
.ed { width: 16px; height: 16px; margin-top: -1px; }

.dt-bottom { display: flex; justify-content: space-between; align-items: flex-start; margin-top: 10px; }
.dt-info { font-size: 15.500px; color: #333; padding-top: 10px; letter-spacing: .65px; }
.pager { display: flex; height: 38px; border: 1px solid #ddd; border-radius: 4px; font-size: 15.500px; color: #333; letter-spacing: .6px; }
.pager a { display: flex; align-items: center; justify-content: center; height: 100%; }
.pg-prev { width: 97px; }
.pg-on { width: 35px; background: #3498db; color: #fff; }
.pg-two { width: 36px; border-right: 1px solid #ddd; }
.pg-next { width: 65px; }

/* taskbar */
.taskbar { height: 60px; display: flex; align-items: center; position: relative; color: #fff; font-family: "Open Sans", sans-serif;
  background:
    radial-gradient(ellipse 190px 9px at 960px 0, #e0b0e0 0, #e4bcd8 60%, rgba(236,210,210,0) 100%),
    radial-gradient(ellipse 218px 38px at 960px 0, #f8f2c8 0, #f6efc0 72%, #ecd6bc 90%, rgba(214,160,170,0) 100%),
    linear-gradient(90deg, #0e0128 0, #150433 380px, #3a1a5c 560px, #805090 730px, #a45a84 860px, #ac5c78 1100px, #a24656 1240px, #751a14 1300px, #661208 1420px, #3a0606 1750px, #300404 1920px);
}
.tb-stock { width: 420px; flex: none; display: flex; align-items: center; position: relative; padding-left: 25px; }
.stock-ic { width: 30px; height: 30px; margin-top: 6px; }
.stock-badge { position: absolute; left: 38px; top: -3px; width: 20px; height: 20px; background: #ff9aa2; border-radius: 50%; color: #222; font-size: 12px; display: flex; align-items: center; justify-content: center; }
.stock-txt { margin-left: 9px; font-size: 14px; line-height: 21px; margin-top: -3px; letter-spacing: .1px; }
.stock-neg { color: #f47c86; }
.tb-center { display: flex; align-items: center; }
.win { width: 30px; height: 30px; margin-left: -1px; }
.tb-search { width: 275px; height: 40px; margin-left: 17px; background: rgba(255,255,255,.13); border-radius: 20px; display: flex; align-items: center; padding-left: 15px; font-size: 16px; color: #e6e2ec; box-shadow: inset 0 0 0 1px rgba(255,255,255,.08); }
.tb-search-ic { width: 18px; height: 21px; }
.tb-search span { margin-left: 13px; flex: 1; }
.tb-deco { width: 48px; height: 30px; margin-right: 12px; }
.tb-apps { display: flex; margin-left: 2px; }
.app { width: 55px; height: 60px; display: flex; align-items: center; justify-content: center; position: relative; }
.app svg { width: 32px; height: 32px; position: relative; }
.app-run::after { content: ""; position: absolute; left: 24px; bottom: 6px; width: 8px; height: 4px; background: #d8c8d0; border-radius: 2px; }
.app-on::before { content: ""; position: absolute; left: 3px; top: 6px; width: 50px; height: 50px; background: rgba(255,255,255,.13); border-radius: 5px; }
.app-on::after { content: ""; position: absolute; left: 18px; bottom: 6px; width: 19px; height: 4px; background: #f06060; border-radius: 2px; }
.pre { font-family: "Liberation Sans", sans-serif; font-size: 8px; font-weight: 700; fill: #3a2a00; text-anchor: middle; }
.ij { font-family: "Liberation Sans", sans-serif; font-size: 9px; font-weight: 700; fill: #fff; text-anchor: middle; }
.tb-tray { margin-left: auto; display: flex; align-items: center; height: 100%; padding-right: 24px; }
.tr-chev { width: 14px; height: 14px; }
.tr-v { width: 21px; height: 25px; margin-left: 23px; }
.tr-lang { font-size: 14px; margin-left: 22px; width: 51px; }
.tr-ic { width: 20px; height: 20px; margin-right: 10px; }
.tr-clock { font-size: 14px; line-height: 21px; text-align: right; width: 72px; margin-left: 9px; }
.tr-bell { width: 20px; height: 22px; margin-left: 9px; }
```
